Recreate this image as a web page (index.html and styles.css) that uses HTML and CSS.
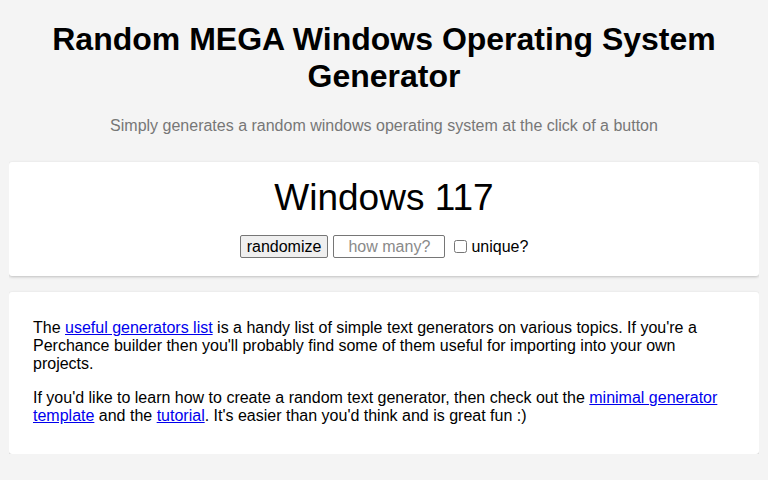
FILE: index.html
```html
<!DOCTYPE html>
<html lang="en">
<head>
<meta charset="utf-8">
<title>Random MEGA Windows Operating System Generator</title>
<link rel="stylesheet" href="styles.css">
</head>
<body>
<h1 class="title">Random MEGA Windows Operating System Generator</h1>
<p class="subtitle">Simply generates a random windows operating system at the click of a button</p>
<div class="card card-main">
  <p class="output">Windows 117</p>
  <div class="controls">
    <button class="btn" type="button">randomize</button>
    <input class="count" type="text" placeholder="how many?">
    <label class="unique"><input class="check" type="checkbox">unique?</label>
  </div>
</div>
<div class="card card-info">
  <p>The <a href="#">useful generators list</a> is a handy list of simple text generators on various topics. If you're a Perchance builder then you'll probably find some of them useful for importing into your own projects.</p>
  <p>If you'd like to learn how to create a random text generator, then check out the <a href="#">minimal generator template</a> and the <a href="#">tutorial</a>. It's easier than you'd think and is great fun :)</p>
</div>
</body>
</html>
```
FILE: styles.css
```css
html {
  background: #f4f4f4;
}
body {
  margin: 0 9px 8px;
  padding-top: 21.44px;
  font-family: "Liberation Sans", Arial, sans-serif;
  font-size: 16px;
  color: #000;
  background: #f4f4f4;
}
.title {
  font-size: 32px;
  font-weight: bold;
  text-align: center;
  margin: 0 0 21.44px;
}
.subtitle {
  text-align: center;
  color: #777;
  margin: 0 0 27px;
}
.card {
  background: #fff;
  border-radius: 3px;
  box-shadow: 0 1px 3px rgba(0, 0, 0, 0.22);
}
.card-main {
  text-align: center;
  padding: 15.6px 0 17.5px;
  margin-bottom: 16px;
}
.output {
  font-size: 37px;
  margin: 0 0 16px;
}
.controls {
  display: flex;
  justify-content: center;
  align-items: center;
  height: 23px;
}
.btn {
  font-family: inherit;
  font-size: 16px;
  padding: 1px 6px;
  height: 23px;
  background: #efefef;
  border: 1px solid #767676;
  border-radius: 2px;
  color: #000;
}
.count {
  font-family: inherit;
  font-size: 16px;
  box-sizing: border-box;
  width: 112px;
  height: 23px;
  margin-left: 5px;
  padding: 1px 2px;
  border: 1px solid #767676;
  border-radius: 2px;
  text-align: center;
}
.count::placeholder {
  color: #8a8a8a;
}
.unique {
  display: flex;
  align-items: center;
  margin-left: 5px;
}
.check {
  width: 13px;
  height: 13px;
  margin: 3px 4px 3px 4px;
}
.card-info {
  padding: 11.5px 24px 13px;
}
.card-info p {
  margin: 16px 0;
}
a {
  color: #0000ee;
}
```
